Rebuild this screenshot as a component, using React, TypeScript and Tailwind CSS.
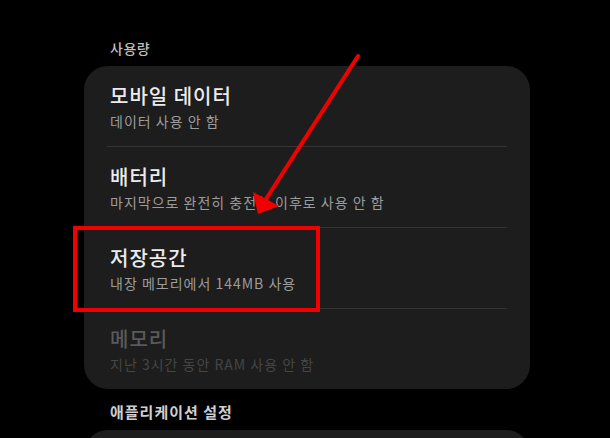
import React from "react";

type Row = { title: string; sub: string; dim?: boolean };

const ROWS: Row[] = [
  { title: "모바일 데이터", sub: "데이터 사용 안 함" },
  { title: "배터리", sub: "마지막으로 완전히 충전한 이후로 사용 안 함" },
  { title: "저장공간", sub: "내장 메모리에서 144MB 사용" },
  { title: "메모리", sub: "지난 3시간 동안 RAM 사용 안 함", dim: true },
];

const FONT = { fontFamily: '"Noto Sans CJK KR", "Noto Sans", sans-serif' };

function SettingRow({ row }: { row: Row }) {
  return (
    <div className="h-[80px] px-[26px] pt-[17px]">
      <div
        className={
          row.dim
            ? "text-[20px] leading-[26px] font-medium tracking-[1px] text-[#5a5a5a]"
            : "text-[20px] leading-[26px] font-medium tracking-[1px] text-[#ececec]"
        }
      >
        {row.title}
      </div>
      <div
        className={
          row.dim
            ? "mt-[2px] text-[14px] leading-[20px] tracking-[1px] text-[#454545]"
            : "mt-[2px] text-[14px] leading-[20px] tracking-[1px] text-[#9c9c9c]"
        }
      >
        {row.sub}
      </div>
    </div>
  );
}

export default function App() {
  return (
    <div className="relative h-[438px] w-[610px] overflow-hidden bg-black" style={FONT}>
      <div className="pt-[38px]">
        <div className="pl-[110px] text-[14px] leading-[20px] font-medium tracking-[0.5px] text-[#bdbdbd]">
          사용량
        </div>

        <div className="mt-[8px] ml-[84px] w-[446px] rounded-[24px] bg-[#1d1d1d]">
          {ROWS.map((row, i) => (
            <React.Fragment key={row.title}>
              {i > 0 && <div className="mx-[23px] h-px bg-[#353535]" />}
              <SettingRow row={row} />
            </React.Fragment>
          ))}
        </div>

        <div className="mt-[13px] pl-[110px] text-[15px] leading-[20px] font-bold tracking-[1px] text-[#cfcfcf]">
          애플리케이션 설정
        </div>
        <div className="mt-[8px] ml-[84px] h-[40px] w-[446px] rounded-t-[24px] bg-[#1d1d1d]" />
      </div>

      {/* highlight box around 저장공간 */}
      <div className="absolute left-[73px] top-[226px] h-[86px] w-[247px] border-[4px] border-[#f20000]" />

      {/* red arrow */}
      <svg className="absolute inset-0" width="610" height="438" viewBox="0 0 610 438">
        <line x1="358" y1="56" x2="266" y2="199" stroke="#f20000" strokeWidth="4" strokeLinecap="round" />
        <polygon points="258,214 253,192 279,206" fill="#f20000" />
      </svg>
    </div>
  );
}
